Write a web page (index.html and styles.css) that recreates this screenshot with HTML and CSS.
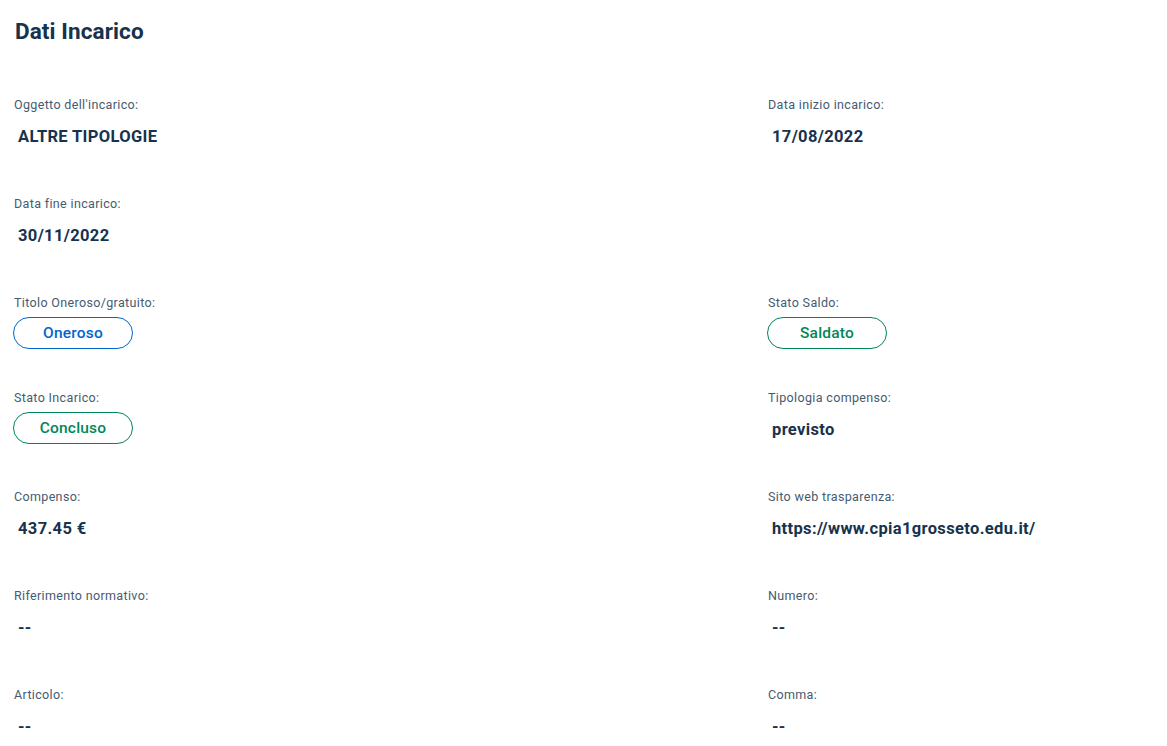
FILE: index.html
```html
<!DOCTYPE html>
<html lang="it">
<head>
<meta charset="utf-8">
<title>Dati Incarico</title>
<link rel="stylesheet" href="styles.css">
</head>
<body>
<main class="page">
  <h2 class="title">Dati Incarico</h2>
  <div class="grid">
    <div class="item"><div class="label">Oggetto dell'incarico:</div><div class="value">ALTRE TIPOLOGIE</div></div>
    <div class="item"><div class="label">Data inizio incarico:</div><div class="value">17/08/2022</div></div>

    <div class="item"><div class="label">Data fine incarico:</div><div class="value">30/11/2022</div></div>
    <div class="item"></div>

    <div class="item"><div class="label">Titolo Oneroso/gratuito:</div><div class="pill pill-blue">Oneroso</div></div>
    <div class="item"><div class="label">Stato Saldo:</div><div class="pill pill-green">Saldato</div></div>

    <div class="item"><div class="label">Stato Incarico:</div><div class="pill pill-green">Concluso</div></div>
    <div class="item"><div class="label">Tipologia compenso:</div><div class="value">previsto</div></div>

    <div class="item"><div class="label">Compenso:</div><div class="value">437.45 €</div></div>
    <div class="item"><div class="label">Sito web trasparenza:</div><div class="value">https://www.cpia1grosseto.edu.it/</div></div>

    <div class="item"><div class="label">Riferimento normativo:</div><div class="value">--</div></div>
    <div class="item"><div class="label">Numero:</div><div class="value">--</div></div>

    <div class="item"><div class="label">Articolo:</div><div class="value">--</div></div>
    <div class="item"><div class="label">Comma:</div><div class="value">--</div></div>
  </div>
</main>
</body>
</html>
```

FILE: styles.css
```css
html, body {
  margin: 0;
  padding: 0;
  background: #ffffff;
}
body {
  font-family: Roboto, "Noto Sans", "Liberation Sans", sans-serif;
  color: #17324d;
}
.page {
  padding: 16px 14px 0 14px;
}
.title {
  margin: 0 0 50px 1px;
  font-size: 22.5px;
  line-height: 30px;
  font-weight: 700;
  color: #17324d;
  letter-spacing: 0.1px;
}
.grid {
  display: grid;
  grid-template-columns: 754px 1fr;
  row-gap: 40px;
}
.item {
  display: flex;
  flex-direction: column;
  align-items: flex-start;
}
.label {
  font-size: 12.5px;
  line-height: 18px;
  color: #455b71;
  letter-spacing: 0.35px;
  margin-bottom: 5px;
}
.value {
  font-size: 16.5px;
  line-height: 36px;
  height: 36px;
  font-weight: 700;
  padding-left: 4px;
  letter-spacing: 0.35px;
  color: #17324d;
}
.pill {
  box-sizing: border-box;
  width: 120px;
  height: 32px;
  border-radius: 16px;
  border: 1px solid;
  display: flex;
  align-items: center;
  justify-content: center;
  font-size: 15.5px;
  font-weight: 500;
  letter-spacing: 0.2px;
  margin-left: -1px;
}
.pill-blue {
  color: #0066cc;
  border-color: #0066cc;
}
.pill-green {
  color: #008758;
  border-color: #008758;
}
```
